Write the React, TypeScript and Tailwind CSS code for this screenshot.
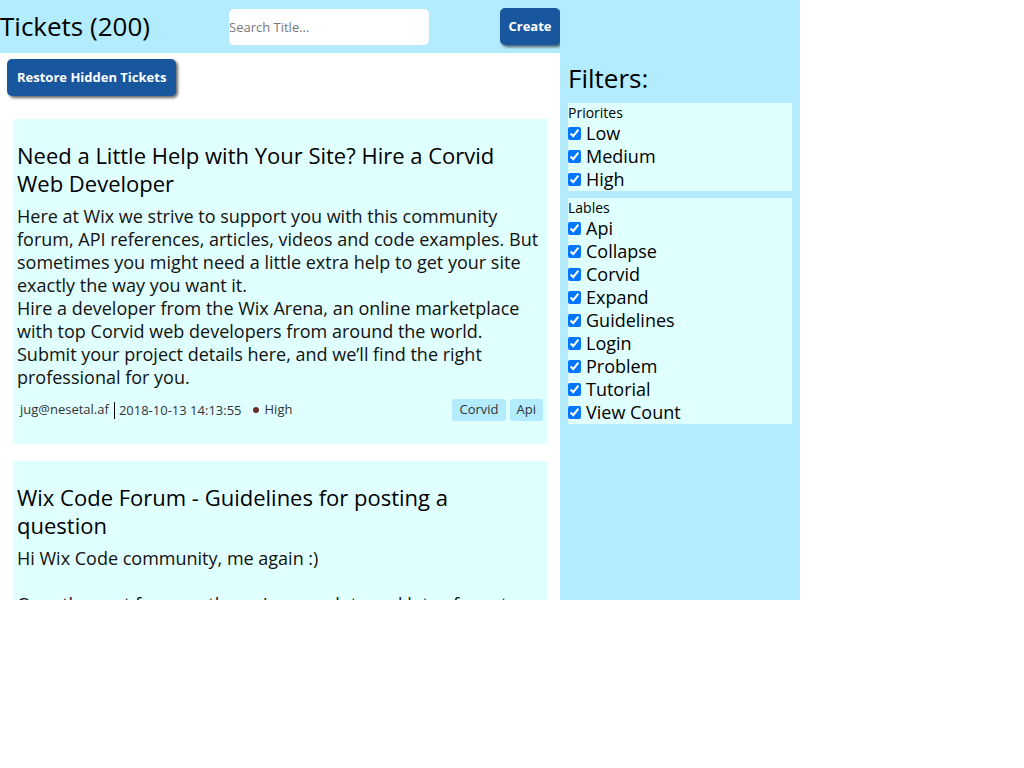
import React from "react";

const font = { fontFamily: '"Open Sans", "Noto Sans", sans-serif' };

function Check({ label }: { label: string }) {
  return (
    <label className="flex items-center h-[23px] text-[18px] text-black">
      <input type="checkbox" defaultChecked className="m-0 mr-[5px] w-[13px] h-[13px] accent-[#0075ff]" />
      <span>{label}</span>
    </label>
  );
}

function Card({ title, body, meta }: { title: string; body: React.ReactNode; meta?: boolean }) {
  return (
    <div className="bg-[#e0ffff] mx-[13px] px-[4px] pt-[22px] pb-[23px] mb-[17px]">
      <h2 className="text-[22px] leading-[28px] font-medium text-black m-0">{title}</h2>
      <div className="mt-[8px] text-[18px] leading-[23px] text-[#111]">{body}</div>
      {meta && (
        <div className="mt-[10px] flex items-center justify-between text-[13px] text-[#333] pl-[3px]">
          <div className="flex items-center">
            <span>jug@nesetal.af</span>
            <span className="border-l border-black ml-[5px] pl-[4px] leading-[17px]">2018-10-13 14:13:55</span>
            <span className="ml-[11px] w-[6px] h-[6px] rounded-full bg-[#6b2a2a]" />
            <span className="ml-[6px]">High</span>
          </div>
          <div className="flex gap-[4px]">
            <span className="bg-[#b3ebff] rounded-[3px] px-[7px] h-[22px] flex items-center">Corvid</span>
            <span className="bg-[#b3ebff] rounded-[3px] px-[7px] h-[22px] flex items-center">Api</span>
          </div>
        </div>
      )}
    </div>
  );
}

export default function App() {
  return (
    <div style={font} className="w-[800px] h-[600px] flex overflow-hidden bg-white">
      <div className="w-[560px] h-[600px] flex flex-col overflow-hidden">
        <div className="h-[53px] shrink-0 bg-[#b3ebff] flex items-center">
          <h1 className="text-[26px] text-black m-0 w-[229px]">Tickets (200)</h1>
          <input
            placeholder="Search Title..."
            className="w-[200px] h-[36px] bg-white rounded-[5px] text-[13px] outline-none placeholder:text-[#777]"
          />
          <button className="ml-[71px] w-[60px] h-[37px] rounded-[5px] bg-[#18579e] text-white text-[13px] font-bold shadow-[2px_2px_3px_rgba(0,0,0,0.6)]">
            Create
          </button>
        </div>
        <div className="pl-[7px] pt-[6px]">
          <button className="h-[37px] px-[10px] rounded-[5px] bg-[#18579e] text-white text-[13px] font-bold shadow-[2px_2px_3px_rgba(0,0,0,0.6)]">
            Restore Hidden Tickets
          </button>
        </div>
        <div className="pt-[23px]">
          <Card
            title="Need a Little Help with Your Site? Hire a Corvid Web Developer"
            meta
            body={
              <>
                <p className="m-0">
                  Here at Wix we strive to support you with this community forum, API references, articles, videos and code examples. But sometimes you might need a little extra help to get your site exactly the way you want it.
                </p>
                <p className="m-0">
                  Hire a developer from the Wix Arena, an online marketplace with top Corvid web developers from around the world. Submit your project details here, and we’ll find the right professional for you.
                </p>
              </>
            }
          />
          <Card
            title="Wix Code Forum - Guidelines for posting a question"
            body={
              <>
                <p className="m-0">Hi Wix Code community, me again :)</p>
                <p className="m-0">&nbsp;</p>
                <p className="m-0">Over the past few months we've seen lots and lots of great questions from you.</p>
              </>
            }
          />
        </div>
      </div>
      <div className="w-[240px] h-[600px] bg-[#b3ebff] px-[8px]">
        <div className="text-[26px] text-black leading-[34px] pt-[61px] pb-[8px]">Filters:</div>
        <div className="bg-[#e0ffff]">
          <div className="text-[14px] font-medium leading-[18px] pt-[1px] text-black">Priorites</div>
          <Check label="Low" />
          <Check label="Medium" />
          <Check label="High" />
        </div>
        <div className="bg-[#e0ffff] mt-[7px]">
          <div className="text-[14px] font-medium leading-[18px] pt-[1px] text-black">Lables</div>
          {["Api", "Collapse", "Corvid", "Expand", "Guidelines", "Login", "Problem", "Tutorial", "View Count"].map((l) => (
            <Check key={l} label={l} />
          ))}
        </div>
      </div>
    </div>
  );
}
